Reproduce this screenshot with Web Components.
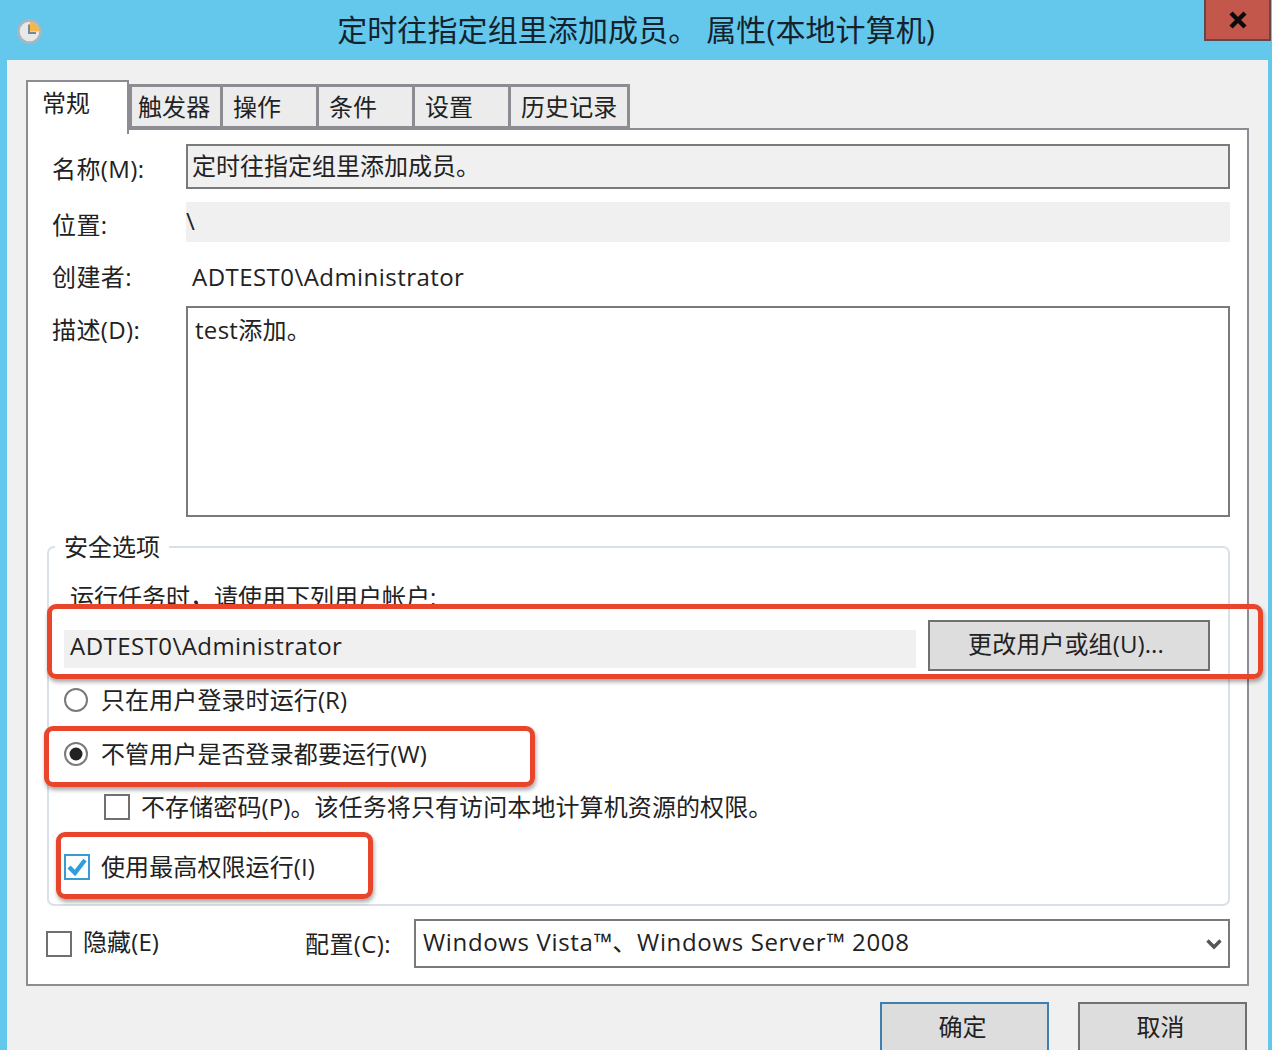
<!DOCTYPE html>
<html lang="zh">
<head>
<meta charset="utf-8">
<title>属性</title>
<style>
html, body { margin: 0; padding: 0; background: #63c8ec; }
body { width: 1272px; height: 1050px; overflow: hidden; color: #222; font: 24px/32px "Open Sans", "Noto Sans CJK SC", sans-serif; }
</style>
</head>
<body>
<task-dialog>
  <title-bar slot="title">定时往指定组里添加成员。 属性(本地计算机)</title-bar>

  <tab-strip slot="tabs">
    <tab-item active>常规</tab-item>
    <tab-item>触发器</tab-item>
    <tab-item>操作</tab-item>
    <tab-item>条件</tab-item>
    <tab-item>设置</tab-item>
    <tab-item wide>历史记录</tab-item>
  </tab-strip>

  <form-row label="名称(M):" kind="name">定时往指定组里添加成员。</form-row>
  <form-row label="位置:" kind="location">\</form-row>
  <form-row label="创建者:" kind="author">ADTEST0\Administrator</form-row>
  <form-row label="描述(D):" kind="desc">test添加。</form-row>

  <group-box legend="安全选项">
    <account-row hint="运行任务时，请使用下列用户帐户:" account="ADTEST0\Administrator">
      <dlg-button kind="change">更改用户或组(U)...</dlg-button>
    </account-row>
    <opt-row type="radio" top="13">只在用户登录时运行(R)</opt-row>
    <opt-row type="radio" checked top="22">不管用户是否登录都要运行(W)</opt-row>
    <opt-row type="check" indent top="21">不存储密码(P)。该任务将只有访问本地计算机资源的权限。</opt-row>
    <opt-row type="check" checked top="28">使用最高权限运行(I)</opt-row>
  </group-box>

  <config-row>
    <opt-row type="check" slot="hidden">隐藏(E)</opt-row>
  </config-row>

  <dlg-button slot="actions" kind="ok">确定</dlg-button>
  <dlg-button slot="actions" kind="cancel">取消</dlg-button>

  <note-box slot="notes" style="left:47px;top:604px;width:1216px;height:75px"></note-box>
  <note-box slot="notes" style="left:44px;top:726px;width:491px;height:61px"></note-box>
  <note-box slot="notes" style="left:56px;top:832px;width:317px;height:67px"></note-box>
</task-dialog>

<script>
class TaskDialog extends HTMLElement {
  constructor() {
    super();
    this.attachShadow({mode: 'open'});
    this.shadowRoot.innerHTML = `
      <style>
        :host { display: block; position: relative; width: 1272px; height: 1050px; overflow: hidden; }
        .body { margin: 0 4px 0 7px; height: 991px; background: #f0f0f0; border-top: 1px solid #8fb3d6; padding: 20px 19px 0; box-sizing: border-box; }
        .panel { position: relative; background: #fff; border: 2px solid #8c8c92; height: 858px; box-sizing: border-box; padding: 14px 17px 0 19px; }
        .actions { display: flex; justify-content: flex-end; gap: 29px; margin: 16px 2px 0 0; }
      </style>
      <slot name="title"></slot>
      <div class="body">
        <slot name="tabs"></slot>
        <div class="panel"><slot></slot></div>
        <div class="actions"><slot name="actions"></slot></div>
      </div>
      <slot name="notes"></slot>`;
  }
}

class TitleBar extends HTMLElement {
  constructor() {
    super();
    this.attachShadow({mode: 'open'});
    this.shadowRoot.innerHTML = `
      <style>
        :host { display: flex; align-items: center; justify-content: center; position: relative; height: 59px; background: #63c8ec; color: #14222c; font-size: 30px; line-height: 59px; white-space: pre; }
        svg { position: absolute; left: 16px; top: 18px; }
        .text { letter-spacing: .1px; }
        .close { position: absolute; left: 1204px; top: 0; width: 67px; height: 41px; box-sizing: border-box; background: #c4574c; border: 2px solid #5e4a4c; border-top: 0; display: flex; align-items: center; justify-content: center; }
      </style>
      <svg width="27" height="27" viewBox="0 0 27 27">
        <circle cx="13.5" cy="13.5" r="12.5" fill="#aab5be"/>
        <circle cx="13.5" cy="13.5" r="9.8" fill="#e6e9ec"/>
        <path d="M14 3.7a9.8 9.8 0 0 1 9.3 9.8H14z" fill="#efb94f"/>
        <path d="M13 6.5V15h7" fill="none" stroke="#7d8790" stroke-width="2"/>
      </svg>
      <span class="text"><slot></slot></span>
      <div class="close">
        <svg style="position:static" width="20" height="18" viewBox="0 0 20 18"><path d="M3 2l14 14M17 2L3 16" stroke="#0b0b0b" stroke-width="4.4" fill="none"/></svg>
      </div>`;
  }
}

class TabStrip extends HTMLElement {
  constructor() {
    super();
    this.attachShadow({mode: 'open'});
    this.shadowRoot.innerHTML = `
      <style>
        :host { display: flex; align-items: flex-end; position: relative; z-index: 1; height: 48px; }
      </style>
      <slot></slot>`;
  }
}

class TabItem extends HTMLElement {
  constructor() {
    super();
    this.attachShadow({mode: 'open'});
    this.shadowRoot.innerHTML = `
      <style>
        :host { display: block; box-sizing: border-box; width: 99px; height: 44px; margin-left: -3px; background: #ececec; border: 3px solid #8c8c92; border-bottom: 2px solid #8c8c92; padding-left: 10px; font-size: 24px; line-height: 40px; letter-spacing: .1px; white-space: nowrap; }
        :host(:nth-child(2)) { margin-left: 0; width: 94px; padding-left: 6px; }
        :host([wide]) { width: 122px; }
        :host([active]) { width: 103px; height: 54px; margin: 0 0 -6px 0; background: #fff; border-width: 2px 2px 0 2px; padding-left: 14px; line-height: 42px; align-self: flex-start; }
      </style>
      <slot></slot>`;
  }
}

class FormRow extends HTMLElement {
  constructor() {
    super();
    this.attachShadow({mode: 'open'});
    this.shadowRoot.innerHTML = `
      <style>
        :host { display: grid; grid-template-columns: 139px 1fr; }
        .label { padding-left: 5px; white-space: nowrap; letter-spacing: .4px; }
        .value { box-sizing: border-box; white-space: pre; }
        :host([kind="name"]) .value { height: 45px; background: #f0f0f0; border: 2px solid #7a7a7a; padding: 4px 0 0 4px; }
        :host([kind="name"]) .label { padding-top: 9px; }
        :host([kind="location"]) { margin-top: 13px; }
        :host([kind="location"]) .value { height: 40px; background: #f0f0f0; padding-top: 3px; }
        :host([kind="location"]) .label { padding-top: 7px; }
        :host([kind="author"]) { margin-top: 19px; height: 32px; }
        :host([kind="author"]) .value { padding-left: 6px; letter-spacing: .45px; }
        :host([kind="desc"]) { margin-top: 13px; }
        :host([kind="desc"]) .value { height: 211px; border: 2px solid #7a7a7a; padding: 6px 0 0 7px; letter-spacing: .3px; }
        :host([kind="desc"]) .label { padding-top: 8px; }
      </style>
      <div class="label"></div>
      <div class="value"><slot></slot></div>`;
    this.shadowRoot.querySelector('.label').textContent = this.getAttribute('label');
  }
}

class GroupBox extends HTMLElement {
  constructor() {
    super();
    this.attachShadow({mode: 'open'});
    this.shadowRoot.innerHTML = `
      <style>
        :host { display: block; position: relative; box-sizing: border-box; height: 360px; margin-top: 29px; border: 2px solid #d9e0e7; border-radius: 7px; padding: 33px 17px 0 15px; }
        .legend { position: absolute; left: 6px; top: -16px; padding: 0 9px; background: #fff; line-height: 30px; }
      </style>
      <div class="legend"></div>
      <slot></slot>`;
    this.shadowRoot.querySelector('.legend').textContent = this.getAttribute('legend');
  }
}

class AccountRow extends HTMLElement {
  constructor() {
    super();
    this.attachShadow({mode: 'open'});
    this.shadowRoot.innerHTML = `
      <style>
        :host { display: block; }
        .hint { height: 32px; padding-left: 6px; white-space: nowrap; }
        .row { position: relative; display: flex; align-items: flex-start; gap: 12px; margin-top: -8px; padding-top: 15px; height: 51px; background: #fff; }
        .field { width: 852px; height: 38px; margin-top: 10px; box-sizing: border-box; background: #f0f0f0; padding-left: 6px; line-height: 32px; letter-spacing: .45px; }
      </style>
      <div class="hint"></div>
      <div class="row"><div class="field"></div><slot></slot></div>`;
    this.shadowRoot.querySelector('.hint').textContent = this.getAttribute('hint');
    this.shadowRoot.querySelector('.field').textContent = this.getAttribute('account');
  }
}

class OptRow extends HTMLElement {
  constructor() {
    super();
    this.attachShadow({mode: 'open'});
    const checked = this.hasAttribute('checked');
    const mark = this.getAttribute('type') === 'radio'
      ? `<svg class="radio" width="24" height="26" viewBox="0 0 24 26"><circle cx="12" cy="13" r="11" fill="#fff" stroke="#7a7a7a" stroke-width="2"/>${checked ? '<circle cx="12" cy="13" r="6.5" fill="#222"/>' : ''}</svg>`
      : checked
        ? `<svg width="26" height="26" viewBox="0 0 26 26"><rect x="1" y="1" width="24" height="24" fill="#fff" stroke="#3a9bd3" stroke-width="2"/><path d="M5 13l6 6L21 6" fill="none" stroke="#2f9fdc" stroke-width="4.4"/></svg>`
        : `<svg width="26" height="26" viewBox="0 0 26 26"><rect x="1" y="1" width="24" height="24" fill="#fff" stroke="#707070" stroke-width="2"/></svg>`;
    const top = this.getAttribute('top') || 0;
    this.shadowRoot.innerHTML = `
      <style>
        :host { display: flex; align-items: center; height: 32px; white-space: nowrap; letter-spacing: .1px; }
        :host([indent]) { padding-left: 40px; }
        :host([slot="hidden"]) { margin-left: -1px; }
        :host([slot="hidden"]) span { margin-top: -4px; }
        svg { flex: none; margin-right: 11px; }
        svg.radio { margin-right: 13px; }
      </style>
      ${mark}<span><slot></slot></span>`;
    this.style.marginTop = top + 'px';
  }
}

class ConfigRow extends HTMLElement {
  constructor() {
    super();
    this.attachShadow({mode: 'open'});
    this.shadowRoot.innerHTML = `
      <style>
        :host { display: flex; align-items: center; margin-top: 13px; height: 49px; }
        .label { margin-left: 146px; width: 109px; flex: none; white-space: nowrap; letter-spacing: .4px; }
        .select { flex: 1; height: 49px; box-sizing: border-box; border: 2px solid #7a7a7a; padding-left: 7px; display: flex; justify-content: space-between; align-items: center; letter-spacing: .65px; white-space: nowrap; }
        .select span { margin-top: -4px; }
        svg { margin-right: 6px; }
      </style>
      <slot name="hidden"></slot>
      <div class="label">配置(C):</div>
      <div class="select">
        <span>Windows Vista™、Windows Server™ 2008</span>
        <svg width="16" height="12" viewBox="0 0 16 12"><path d="M1.5 2.5L8 9l6.5-6.5" fill="none" stroke="#555" stroke-width="3.4"/></svg>
      </div>`;
  }
}

class DlgButton extends HTMLElement {
  constructor() {
    super();
    this.attachShadow({mode: 'open'});
    this.shadowRoot.innerHTML = `
      <style>
        :host { display: flex; align-items: flex-start; justify-content: center; box-sizing: border-box; width: 169px; height: 48px; padding-right: 4px; background: #dddddd; border: 2px solid #707070; border-bottom: 0; white-space: nowrap; line-height: 46px; flex: none; }
        :host([kind="ok"]) { border-color: #3f7fb0; }
        :host([kind="change"]) { width: 282px; height: 51px; padding-right: 6px; border-bottom: 2px solid #707070; letter-spacing: .1px; line-height: 44px; }
      </style>
      <slot></slot>`;
  }
}

class NoteBox extends HTMLElement {
  constructor() {
    super();
    this.attachShadow({mode: 'open'});
    this.shadowRoot.innerHTML = `
      <style>
        :host { display: block; position: absolute; box-sizing: border-box; border: 5px solid #e8452a; border-radius: 9px; box-shadow: 1px 3px 4px rgba(0,0,0,.35); }
      </style>`;
  }
}

customElements.define('task-dialog', TaskDialog);
customElements.define('title-bar', TitleBar);
customElements.define('tab-strip', TabStrip);
customElements.define('tab-item', TabItem);
customElements.define('form-row', FormRow);
customElements.define('group-box', GroupBox);
customElements.define('account-row', AccountRow);
customElements.define('opt-row', OptRow);
customElements.define('config-row', ConfigRow);
customElements.define('dlg-button', DlgButton);
customElements.define('note-box', NoteBox);
</script>
</body>
</html>
